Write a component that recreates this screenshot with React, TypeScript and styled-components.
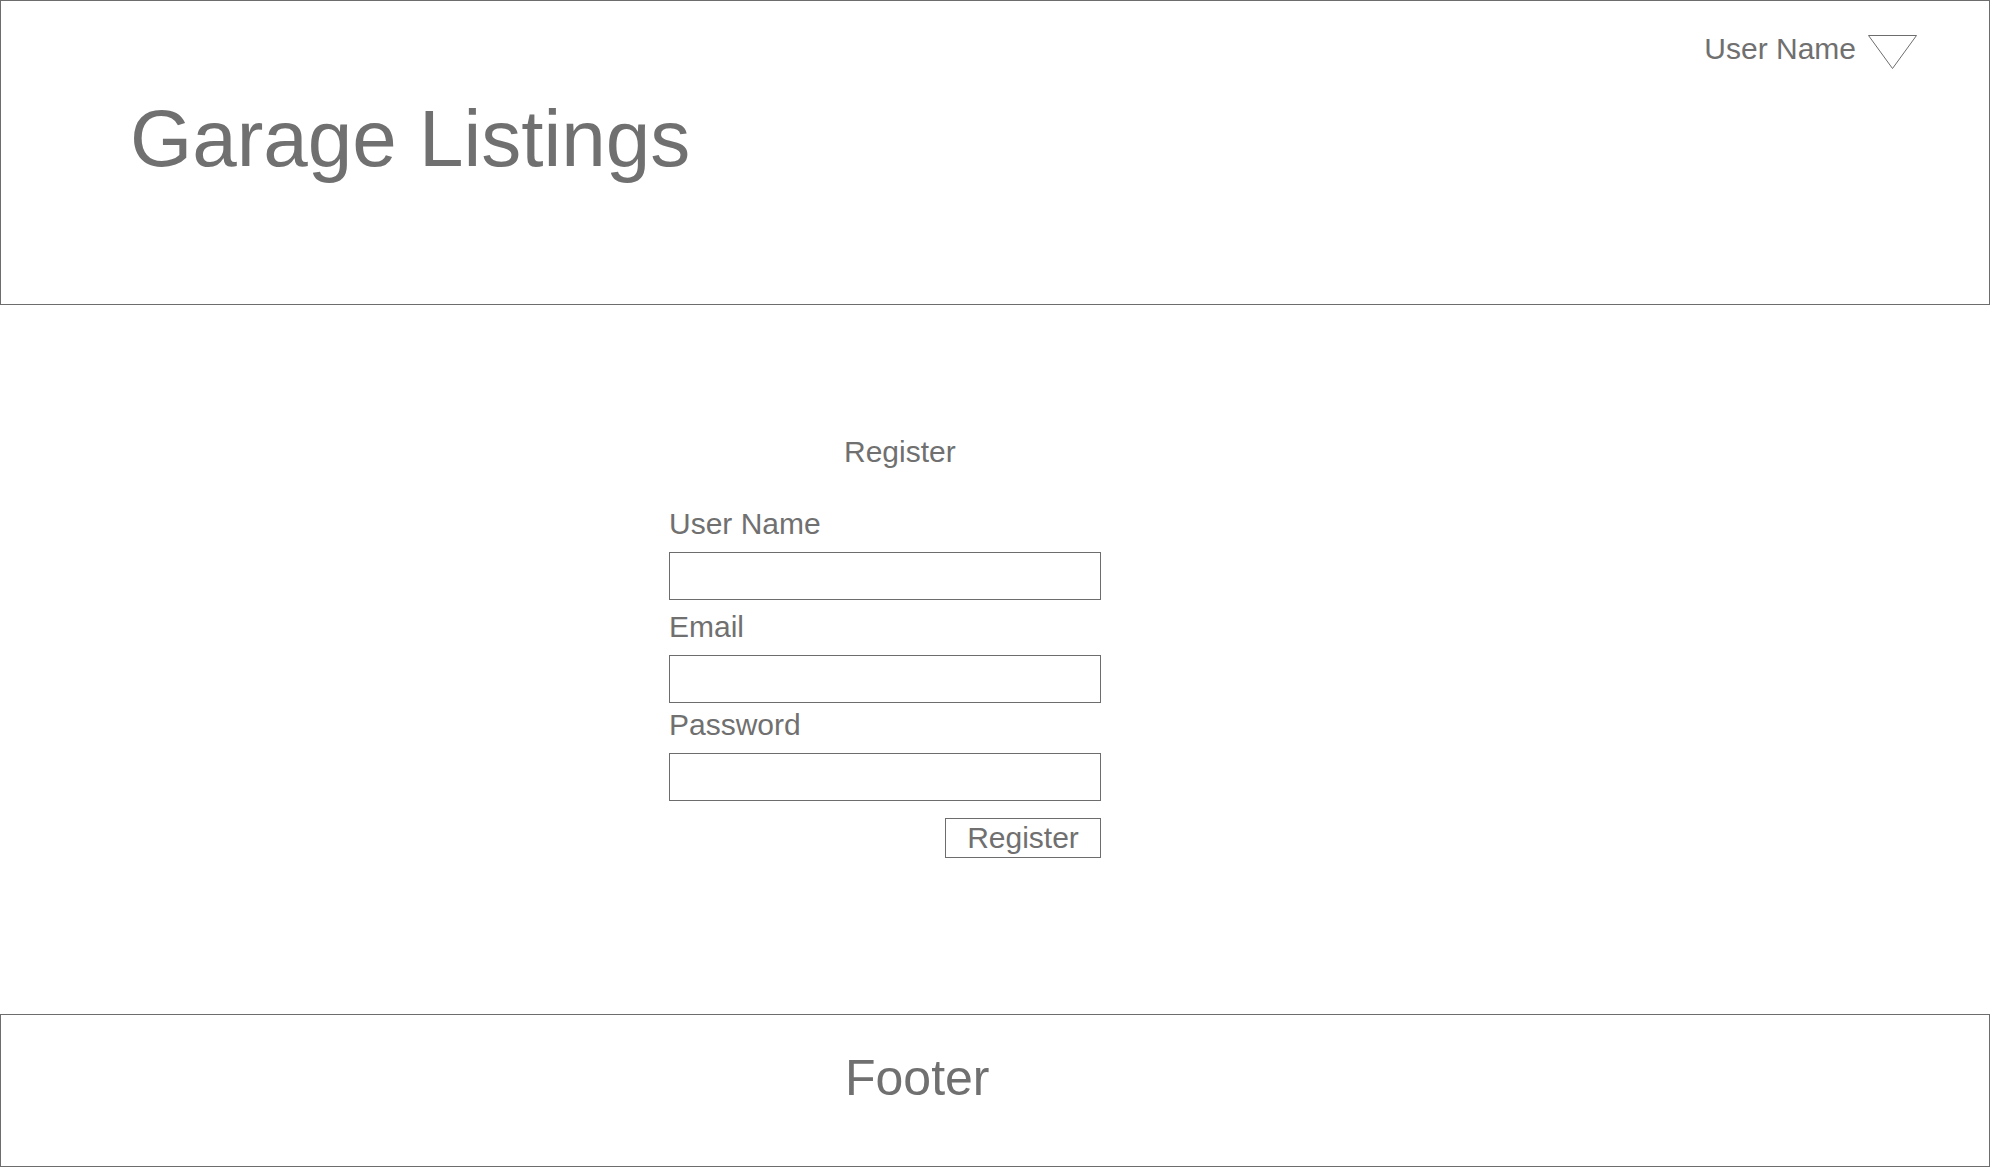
import React from "react";
import styled, { createGlobalStyle } from "styled-components";

const GlobalStyle = createGlobalStyle`
  html, body {
    margin: 0;
    padding: 0;
    background: #ffffff;
  }
  body {
    font-family: "Liberation Sans", Arial, Helvetica, sans-serif;
    color: #707070;
  }
  * { box-sizing: border-box; }
`;

const Page = styled.div`
  display: flex;
  flex-direction: column;
  min-height: 100vh;
  width: 100%;
`;

const Header = styled.header`
  height: 305px;
  border: 1px solid #6d6d6d;
  display: flex;
  flex-direction: column;
  padding: 32px 72px 0 129px;
`;

const UserBar = styled.div`
  display: flex;
  justify-content: flex-end;
  align-items: flex-start;
  gap: 12px;
`;

const UserName = styled.span`
  font-size: 30px;
  line-height: 32px;
  color: #707070;
`;

const Caret = styled.svg`
  display: block;
  margin-top: 2px;
`;

const Title = styled.h1`
  margin: 30px 0 0 0;
  font-size: 80px;
  line-height: 80px;
  font-weight: 400;
  color: #707070;
`;

const Main = styled.main`
  flex: 1;
  display: flex;
  flex-direction: column;
  padding: 131px 0 0 669px;
`;

const Form = styled.form`
  width: 432px;
  display: flex;
  flex-direction: column;
`;

const FormTitle = styled.h2`
  margin: 0 0 0 175px;
  font-size: 30px;
  line-height: 32px;
  font-weight: 400;
  color: #707070;
`;

const Label = styled.label<{ $top: number }>`
  display: block;
  margin-top: ${(p) => p.$top}px;
  margin-bottom: 12px;
  font-size: 30px;
  line-height: 32px;
  color: #707070;
`;

const Input = styled.input`
  display: block;
  width: 432px;
  height: 48px;
  margin: 0;
  padding: 0 10px;
  border: 1px solid #6d6d6d;
  border-radius: 0;
  background: #ffffff;
  font-family: inherit;
  font-size: 24px;
  color: #555;
  outline: none;
`;

const Actions = styled.div`
  display: flex;
  justify-content: flex-end;
  margin-top: 17px;
`;

const Button = styled.button`
  width: 156px;
  height: 40px;
  padding: 0;
  border: 1px solid #6d6d6d;
  border-radius: 0;
  background: #ffffff;
  font-family: inherit;
  font-size: 30px;
  line-height: 36px;
  color: #707070;
  cursor: pointer;
`;

const Footer = styled.footer`
  height: 153px;
  border: 1px solid #6d6d6d;
  padding: 38px 0 0 844px;
`;

const FooterText = styled.div`
  font-size: 50px;
  line-height: 50px;
  color: #707070;
`;

export default function App() {
  return (
    <>
      <GlobalStyle />
      <Page>
        <Header>
          <UserBar>
            <UserName>User Name</UserName>
            <Caret width="49" height="34" viewBox="0 0 49 34">
              <polygon
                points="0.5,0.5 48.5,0.5 24.5,33.5"
                fill="none"
                stroke="#6d6d6d"
                strokeWidth="1"
              />
            </Caret>
          </UserBar>
          <Title>Garage Listings</Title>
        </Header>
        <Main>
          <Form onSubmit={(e) => e.preventDefault()}>
            <FormTitle>Register</FormTitle>
            <Label $top={40} htmlFor="username">User Name</Label>
            <Input id="username" type="text" />
            <Label $top={11} htmlFor="email">Email</Label>
            <Input id="email" type="email" />
            <Label $top={6} htmlFor="password">Password</Label>
            <Input id="password" type="password" />
            <Actions>
              <Button type="submit">Register</Button>
            </Actions>
          </Form>
        </Main>
        <Footer>
          <FooterText>Footer</FooterText>
        </Footer>
      </Page>
    </>
  );
}
